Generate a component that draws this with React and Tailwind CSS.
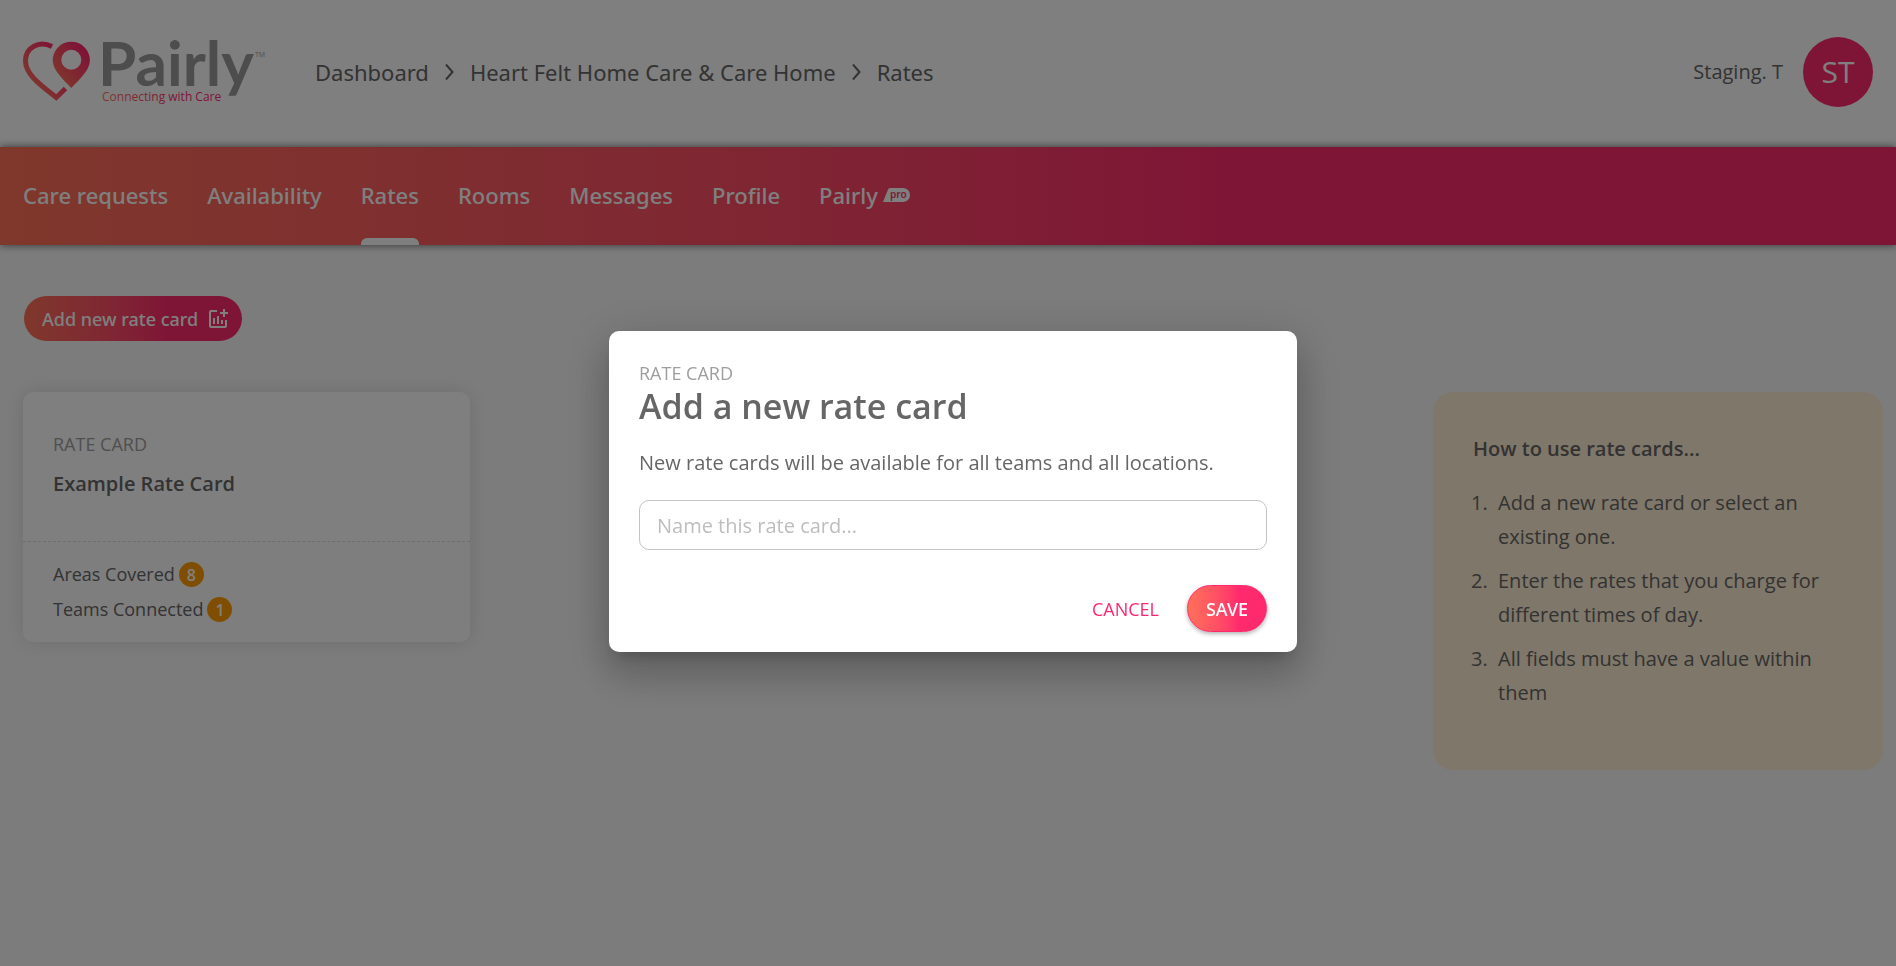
import { MdOutlineAddchart } from "react-icons/md";

const links = ["Care requests", "Availability", "Rates", "Rooms", "Messages", "Profile"];

const tips = [
  "Add a new rate card or select an existing one.",
  "Enter the rates that you charge for different times of day.",
  "All fields must have a value within them",
];

function Logo() {
  return (
    <svg width="244" height="74" viewBox="0 0 244 74" role="img" aria-label="Pairly" className="overflow-visible">
      <defs>
        <linearGradient id="heart" x1="0" y1="1" x2="1" y2="0">
          <stop offset="0.15" stopColor="#ff6f5a" />
          <stop offset="0.85" stopColor="#ff266e" />
        </linearGradient>
        <linearGradient id="tag" x1="0" y1="0" x2="1" y2="0">
          <stop offset="0" stopColor="#ff7058" />
          <stop offset="0.7" stopColor="#ff266e" />
        </linearGradient>
      </defs>
      <path
        fill="none"
        stroke="url(#heart)"
        strokeWidth="5"
        d="M29 11.500C16 5 2.500 12.500 2.500 26C2.500 40 19 51 33.300 62.500L42.500 53.500"
      />
      <path
        fill="url(#heart)"
        fillRule="evenodd"
        d="M48.300 6.700a18.600 18.600 0 0 1 18.600 18.600C66.900 35 57 44 48.300 53C39.600 44 29.700 35 29.700 25.300A18.600 18.600 0 0 1 48.300 6.700zM48.300 14.700a10 10 0 1 0 0 20a10 10 0 1 0 0-20z"
      />
      <text x="75" y="51" fontSize="62" className="fill-[#9a9a9a] font-[Lato] font-bold">Pairly</text>
      <text x="79" y="66" fontSize="12" fill="url(#tag)">Connecting with Care</text>
      <text x="232" y="22" fontSize="7" className="fill-[#9a9a9a]">TM</text>
    </svg>
  );
}

function Chevron() {
  return (
    <svg width="9" height="16" viewBox="0 0 9 16" fill="none" stroke="currentColor" strokeWidth="2" aria-hidden="true">
      <path d="M1 0.500l6.500 7.500L1 15.500" />
    </svg>
  );
}

function Count({ children }) {
  return (
    <span className="flex size-[25px] items-center justify-center rounded-full bg-[#ff9d00] text-base font-semibold text-white">
      {children}
    </span>
  );
}

export default function App() {
  return (
    <div className="min-h-screen bg-[#f9f9f9] font-['Open_Sans',sans-serif] text-[#666666]">
      <header className="flex h-[147px] items-center bg-white px-[23px] pb-1">
        <a href="#home" className="mr-12 block">
          <Logo />
        </a>
        <nav aria-label="Breadcrumb" className="flex items-center gap-4 font-['Noto_Sans',sans-serif] text-[22px] leading-8">
          <a href="#dashboard">Dashboard</a>
          <Chevron />
          <a href="#home-care">Heart Felt Home Care &amp; Care Home</a>
          <Chevron />
          <a href="#rates">Rates</a>
        </nav>
        <div className="ml-auto flex items-center gap-5">
          <span className="text-xl">Staging. T</span>
          <span className="flex size-[70px] items-center justify-center rounded-full bg-[#ff2a6d] text-3xl text-white">ST</span>
        </div>
      </header>

      <nav
        aria-label="Main"
        className="relative flex h-[98px] items-stretch gap-[39px] bg-linear-to-r from-[#ff7058] to-[#ff2a6d] to-65% px-[23px] font-['Noto_Sans',sans-serif] text-[22px] font-medium text-white shadow-[0_0_8px_rgba(0,0,0,0.6)]"
      >
        {links.map((l) => (
          <a key={l} href={"#" + l} className="relative flex items-center pb-0.5">
            {l}
            {l === "Rates" && <span className="absolute inset-x-0 bottom-0 h-[7px] rounded-t-md bg-white" />}
          </a>
        ))}
        <a href="#pro" className="flex items-center gap-[5px] pb-0.5">
          Pairly
          <svg width="28" height="14" viewBox="0 0 28 14" aria-label="pro" className="overflow-visible">
            <path fill="#fff" d="M5 1.500Q5.500 0 7 0H20a7 7 0 0 1 0 14H0z" />
            <text x="7" y="10" fontSize="10" fontWeight="600" fill="#f03a68">pro</text>
          </svg>
        </a>
      </nav>

      <main className="pr-[13px] pl-[23px]">
        <button className="mt-[51px] ml-px flex h-[45px] items-center gap-2 rounded-full bg-linear-to-r from-[#ff7058] to-[#ff2a6d] to-65% pr-3 pl-[18px] font-['Noto_Sans',sans-serif] text-lg font-medium text-white">
          Add new rate card
          <MdOutlineAddchart className="size-6" />
        </button>
        <div className="mt-[51px] grid grid-cols-4 items-start gap-5">
          <div className="col-span-3 grid grid-cols-3 gap-6">
            <article className="rounded-[10px] bg-white shadow-[0_0_20px_rgba(0,0,0,0.12)]">
              <div className="h-[149px] px-[30px] pt-10">
                <p className="text-lg leading-6 text-[#9e9e9e]">RATE CARD</p>
                <h2 className="mt-3 text-xl leading-8 font-semibold">Example Rate Card</h2>
              </div>
              <div className="flex flex-col gap-2.5 rounded-b-[10px] border-t border-dashed border-[#dddddd] bg-[#fcfcfc] px-[30px] py-5 text-lg leading-[25px]">
                <p className="flex items-center gap-1">Areas Covered <Count>8</Count></p>
                <p className="flex items-center gap-1">Teams Connected <Count>1</Count></p>
              </div>
            </article>
          </div>
          <aside className="rounded-[20px] bg-[#ffeed3] px-10 pt-10 pb-[60px] text-xl leading-[34px]">
            <h2 className="font-semibold">How to use rate cards...</h2>
            <ol className="mt-5 flex list-decimal flex-col gap-2.5 pl-5">
              {tips.map((t) => (
                <li key={t} className="pl-[5px]">{t}</li>
              ))}
            </ol>
          </aside>
        </div>
      </main>

      <div className="fixed inset-0 flex items-center justify-center bg-black/50 pt-[17px] pl-2.5">
        <form
          role="dialog"
          aria-labelledby="title"
          className="w-[688px] rounded-[10px] bg-white p-[30px] pb-5 shadow-[0_11px_15px_-7px_rgba(0,0,0,0.2),0_24px_38px_3px_rgba(0,0,0,0.14),0_9px_46px_8px_rgba(0,0,0,0.12)]"
        >
          <p className="text-lg leading-6 text-[#9e9e9e]">RATE CARD</p>
          <h1 id="title" className="text-[34px] leading-[42px] font-semibold">Add a new rate card</h1>
          <label htmlFor="name" className="mt-[19px] block text-xl leading-[34px]">
            New rate cards will be available for all teams and all locations.
          </label>
          <input
            id="name"
            placeholder="Name this rate card..."
            className="mt-5 block h-[50px] w-full rounded-[10px] border border-[#c4c4c4] px-[17px] text-xl placeholder:text-[#bdbdbd]"
          />
          <div className="mt-[35px] flex items-center justify-end gap-7 text-lg">
            <button type="button" className="text-[#ff266e]">CANCEL</button>
            <button
              type="button"
              className="h-[47px] rounded-full border border-[#ff2a6d] bg-linear-to-r from-[#ff7058] to-[#ff2a6d] to-65% px-[18px] font-['Noto_Sans',sans-serif] font-medium text-white shadow-[0_2px_4px_rgba(0,0,0,0.3)]"
            >
              SAVE
            </button>
          </div>
        </form>
      </div>
    </div>
  );
}
